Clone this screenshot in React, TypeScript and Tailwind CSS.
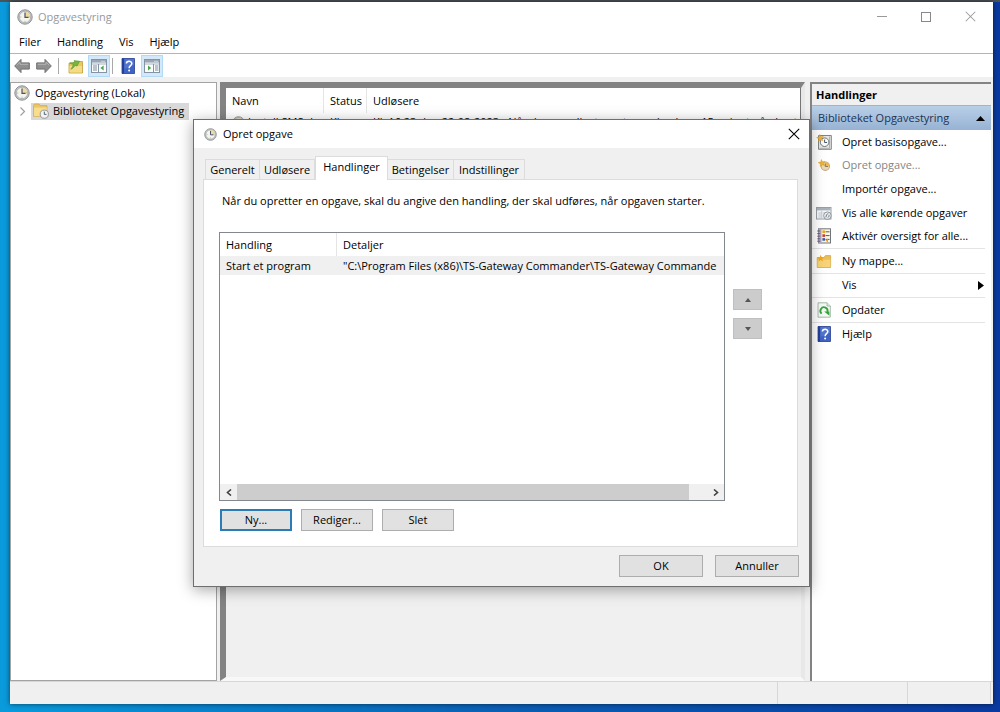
import type { ReactNode } from "react";

function ClockIcon({ className = "size-4" }: { className?: string }) {
  return (
    <svg className={className} viewBox="0 0 16 16" aria-hidden="true">
      <circle cx="8" cy="8" r="7.2" fill="#c3c6c8" stroke="#8d9193" strokeWidth="1" />
      <circle cx="8" cy="8" r="5.6" fill="#f5f5ee" stroke="#9a9d9f" strokeWidth=".6" />
      <path d="M8 8V2.6A5.4 5.4 0 0 1 13.2 8Z" fill="#f0d9a0" />
      <path d="M8 3.6V8.4H11.6" fill="none" stroke="#44536a" strokeWidth="1.2" />
      <path d="M3.4 8h.8M8 12.6v-.8M12.6 8h-.6" stroke="#7b8086" strokeWidth=".8" />
    </svg>
  );
}

function ArrowIcon({ flip = false }: { flip?: boolean }) {
  return (
    <svg className={flip ? "h-4 w-4 -scale-x-100" : "h-4 w-4"} viewBox="0 0 16 16" aria-hidden="true">
      <path d="M.7 8 7 1.4V4.9h8.3v6.2H7v3.5Z" fill="#8f8f8f" stroke="#6f6f6f" strokeWidth="1" strokeLinejoin="round" />
      <path d="M2.6 7.4 6 4.2V6.3h8.2" fill="none" stroke="#b5b5b5" strokeWidth="1" />
    </svg>
  );
}

function FolderUpIcon() {
  return (
    <svg className="h-4 w-4" viewBox="0 0 16 16" aria-hidden="true">
      <path d="M1 5h5l1.5-1.5H14.5V15H1Z" fill="#e9c95f" stroke="#c09c3a" strokeWidth=".8" />
      <path d="M1.5 8H14v6.5H1.5Z" fill="#f4dc86" />
      <path d="M2.8 11.2C4.6 10.6 6.2 9.4 7 7.2L9 8.2 11.6 3.2 6 2.6 6.6 4.2C5 4.8 3.4 5 2 4.8 3 6 4.2 6.4 5.4 6.2 4.8 8.2 4 9.8 2.8 11.2Z" fill="#74b83a" stroke="#4a8f2a" strokeWidth=".5" />
    </svg>
  );
}

function PaneIcon({ side }: { side: "left" | "right" }) {
  const inner = side === "left";
  return (
    <svg className="h-4 w-4" viewBox="0 0 16 16" aria-hidden="true">
      <rect x=".5" y="1.5" width="15" height="13" fill="#fbfcfd" stroke="#8693a3" />
      <path d="M1 2h14v2.6H1Z" fill="#9aa6b5" />
      <path d="M10.5 3.3h1M12.5 3.3h1" stroke="#fff" strokeWidth="1" />
      <path d="M1 6h14" stroke="#a9b4c1" strokeWidth="1" />
      {inner ? (
        <>
          <path d="M7.5 6v8.5" stroke="#8693a3" />
          <path d="M2 8h4M2 10h4M2 12h4" stroke="#7f8b9b" strokeWidth="1" />
          <path d="M12.6 7.6v5L9.4 10.1Z" fill="#49a548" />
        </>
      ) : (
        <>
          <path d="M9.5 6v8.5" stroke="#8693a3" />
          <path d="M11 8h3.4M11 10h3.4M11 12h3.4" stroke="#7f8b9b" strokeWidth="1" />
          <path d="M4 7.6v5l3.2-2.5Z" fill="#49a548" />
        </>
      )}
    </svg>
  );
}

function HelpIcon() {
  return (
    <svg className="h-4 w-4" viewBox="0 0 16 16" aria-hidden="true">
      <path d="M2 .5h12.5v15H2Z" fill="#3f63c4" stroke="#27408f" strokeWidth=".8" />
      <path d="M2 .5h2v15H2Z" fill="#263f96" />
      <path d="M4.5 1H14v6L4.5 11Z" fill="#5f80d6" opacity=".6" />
      <path d="M6.4 5.6C6.4 2.6 11.8 2.6 11.8 5.5 11.8 7.5 9.1 7.8 9.1 10.2" fill="none" stroke="#fff" strokeWidth="1.5" />
      <circle cx="9.1" cy="12.6" r="1" fill="#fff" />
    </svg>
  );
}

function LibraryIcon() {
  return (
    <svg className="h-4 w-4" viewBox="0 0 16 16" aria-hidden="true">
      <path d="M.6 2.2 1.6 1H6l1.2 1.6H14V13.4H.6Z" fill="#ecc766" stroke="#d0a545" strokeWidth=".7" />
      <path d="M1 4.6h12.7v8.6H1Z" fill="#f8dd8c" />
      <circle cx="11.3" cy="11.2" r="4.1" fill="#f3f4f0" stroke="#92979b" strokeWidth="1" />
      <path d="M11.3 8.6v2.8h2.2" fill="none" stroke="#55647a" strokeWidth="1" />
    </svg>
  );
}

function Spark() {
  return <path d="M3.8.5 4.8 2.8 7.4 2.4 5.8 4.3 7 6.6 4.6 5.8 2.6 7.4 2.8 4.9.6 3.6 3.1 3Z" fill="#f2b32c" stroke="#d2901b" strokeWidth=".4" />;
}

function BasicTaskIcon() {
  return (
    <svg className="h-4 w-4" viewBox="0 0 16 16" aria-hidden="true">
      <path d="M2.5 1.5h12.8v13.8H2.5Z" fill="#e6e6e4" stroke="#808386" />
      <path d="M13.5 2.5v11.8H3.5" fill="none" stroke="#a5a5a5" strokeWidth=".8" />
      <circle cx="8.6" cy="8.2" r="4.3" fill="#fafaf6" stroke="#6f767d" strokeWidth="1" />
      <path d="M8.6 5.6v2.9h2.5" fill="none" stroke="#48566b" strokeWidth="1" />
      <Spark />
    </svg>
  );
}

function NewTaskIcon() {
  return (
    <svg className="h-4 w-4" viewBox="0 0 16 16" aria-hidden="true">
      <circle cx="9.3" cy="9.2" r="4.2" fill="#ecd9b2" stroke="#c0ab84" strokeWidth="1.1" />
      <path d="M9.3 9.2V5.2a4 4 0 0 1 4 4Z" fill="#efb950" />
      <path d="M9.3 6.4v3.1h2.7" fill="none" stroke="#8a7a62" strokeWidth="1" />
      <g transform="translate(1.6 2)">
        <Spark />
      </g>
    </svg>
  );
}

function RunningTasksIcon() {
  return (
    <svg className="h-4 w-4" viewBox="0 0 16 16" aria-hidden="true">
      <rect x=".5" y="2.5" width="14.5" height="11.5" fill="#f7f8f9" stroke="#999fa6" />
      <path d="M1 3h13.5v2.4H1Z" fill="#aab3bd" />
      <path d="M2.5 8h3M2.5 10h3M2.5 12h3M7 8h1.5M5.8 6v7.5" stroke="#bcc3ca" strokeWidth=".9" />
      <circle cx="11.4" cy="10.7" r="3.8" fill="#eceff1" stroke="#868d95" strokeWidth=".9" />
      <path d="M9.9 12.4c.2-2 1-3.4 2.5-4.2M11.6 12.8c1.2-.7 1.6-1.8 1.4-3" fill="none" stroke="#66707b" strokeWidth=".9" />
    </svg>
  );
}

function HistoryIcon() {
  return (
    <svg className="h-4 w-4" viewBox="0 0 16 16" aria-hidden="true">
      <rect x="2.5" y=".8" width="12" height="14.2" fill="#fdf6dc" stroke="#70757f" />
      <path d="M2.5.8h3v14.2h-3Z" fill="#b4a7c2" />
      <path d="M1.2 3h3M1.2 5.6h3M1.2 8.2h3M1.2 10.8h3M1.2 13.2h3" stroke="#5d5b6d" strokeWidth=".9" />
      <path d="M9.5 3.8h4M9.5 7.6h4M9.5 11.4h4" stroke="#4a5a86" strokeWidth="1" />
      <path d="M6.4 2.4h2.6v2.6H6.4Z" fill="#e2ab26" />
      <path d="M6.4 6.3h2.6v2.6H6.4Z" fill="#c93c37" />
      <path d="M6.4 10.1h2.6v2.6H6.4Z" fill="#375bb4" />
      <path d="M9.5 12.6 12 10.6v4Z" fill="#dfa62d" />
    </svg>
  );
}

function NewFolderIcon() {
  return (
    <svg className="h-4 w-4" viewBox="0 0 16 16" aria-hidden="true">
      <path d="M1.2 4.5H8L9.4 2.6h5.2V14.5H1.2Z" fill="#eac05a" stroke="#d0a03a" strokeWidth=".7" />
      <path d="M1.6 6.8h12.7v7.3H1.6Z" fill="#f8d377" />
      <path d="M4.6 1.8 5.6 4.2 8.2 4.3 6.2 5.9 6.9 8.4 4.6 7 2.4 8.4 3.1 5.9 1.1 4.3 3.7 4.2Z" fill="#f0a81f" />
    </svg>
  );
}

function RefreshIcon() {
  return (
    <svg className="h-4 w-4" viewBox="0 0 16 16" aria-hidden="true">
      <path d="M2 .8h9L14.3 4v11.2H2Z" fill="#f5faf5" stroke="#92aa95" strokeWidth=".8" />
      <path d="M11 .8V4h3.3" fill="#dce8dc" stroke="#92aa95" strokeWidth=".7" />
      <path d="M5.6 11.6A3.6 3.6 0 1 1 11.4 10" fill="none" stroke="#37a33e" strokeWidth="1.8" />
      <path d="M8.2 9.6h5.2v4.2Z" fill="#37a33e" />
    </svg>
  );
}

function CloseIcon({ className }: { className: string }) {
  return (
    <svg className={className} viewBox="0 0 12 12" aria-hidden="true">
      <path d="M.8.8 11.2 11.2M11.2.8.8 11.2" fill="none" stroke="currentColor" strokeWidth="1.1" />
    </svg>
  );
}

function ToolButton({ label, active = false, children }: { label: string; active?: boolean; children: ReactNode }) {
  return (
    <button
      type="button"
      aria-label={label}
      className={
        active
          ? "flex h-[22px] w-[22px] items-center justify-center border border-[#b3daf5] bg-[#d3e9fa]"
          : "flex h-[22px] w-[22px] items-center justify-center"
      }
    >
      {children}
    </button>
  );
}

function ActionRow({ icon, label, disabled = false, submenu = false }: { icon?: ReactNode; label: string; disabled?: boolean; submenu?: boolean }) {
  return (
    <button
      type="button"
      disabled={disabled}
      className={
        disabled
          ? "flex w-full flex-1 items-center gap-[10px] pl-[4px] pr-[7px] text-left text-[#858585]"
          : "flex w-full flex-1 items-center gap-[10px] pl-[4px] pr-[7px] text-left"
      }
    >
      <span className="w-4 shrink-0">{icon}</span>
      <span className="flex-1 whitespace-nowrap">{label}</span>
      {submenu && (
        <svg className="h-[9px] w-[6px]" viewBox="0 0 6 9" aria-hidden="true">
          <path d="M0 0 6 4.5 0 9Z" fill="#000" />
        </svg>
      )}
    </button>
  );
}

function PushButton({ label, wide = false, primary = false }: { label: string; wide?: boolean; primary?: boolean }) {
  const base = "flex h-[22px] items-center justify-center bg-[#e2e1e2]";
  const width = wide ? "w-[84px]" : "w-[72px]";
  const border = primary ? "border-2 border-[#2b7cb5]" : "border border-[#adadad]";
  return (
    <button type="button" className={`${base} ${width} ${border}`}>
      {label}
    </button>
  );
}

const tabs = [
  { label: "Generelt", width: "w-[55px]" },
  { label: "Udløsere", width: "w-[55px]" },
  { label: "Handlinger", width: "w-[73px]" },
  { label: "Betingelser", width: "w-[66px]" },
  { label: "Indstillinger", width: "w-[71px]" },
];

function TaskDialog() {
  return (
    <section
      role="dialog"
      aria-labelledby="dialog-title"
      className="absolute left-[193px] top-[119px] flex h-[468px] w-[617px] flex-col border border-[#6e6e6e] bg-[#f0f0f0] shadow-[0_3px_14px_rgba(0,0,0,0.35)]"
    >
      <header className="flex h-[28px] items-center bg-white pl-[10px] pr-[9px]">
        <ClockIcon className="h-[13px] w-[13px]" />
        <h2 id="dialog-title" className="flex-1 pl-[6px]">Opret opgave</h2>
        <button type="button" aria-label="Luk dialog" className="flex h-5 w-3 items-center">
          <CloseIcon className="h-3 w-3" />
        </button>
      </header>

      <div role="tablist" className="flex h-[31px] items-end pl-[11px]">
        {tabs.map((tab) => {
          const active = tab.label === "Handlinger";
          return (
            <button
              key={tab.label}
              type="button"
              role="tab"
              aria-selected={active}
              className={`${tab.width} ${
                active
                  ? "relative -mb-px h-[24px] border border-b-0 border-[#dcdcdc] bg-white pb-[3px]"
                  : "h-[20px] border border-b-0 border-l-0 border-[#dcdcdc] first:border-l"
              } whitespace-nowrap`}
            >
              {tab.label}
            </button>
          );
        })}
      </div>

      <div role="tabpanel" className="ml-[9px] mr-[11px] flex flex-1 flex-col border border-[#dcdcdc] bg-white px-[15px] pb-[15px] pt-[13px]">
        <p className="h-4 pl-[3px] leading-4">
          Når du opretter en opgave, skal du angive den handling, der skal udføres, når opgaven starter.
        </p>
        <div className="mt-[23px] flex flex-1 gap-[8px]">
          <div className="flex w-[506px] flex-col border border-[#828790]">
            <div className="flex-1 overflow-hidden">
              <table className="w-full table-fixed border-separate border-spacing-0 whitespace-nowrap text-left">
                <colgroup>
                  <col className="w-[117px]" />
                  <col />
                </colgroup>
                <thead>
                  <tr className="h-[23px]">
                    <th className="border-r border-[#e5e5e5] p-0 pl-[6px] font-normal">Handling</th>
                    <th className="p-0 pl-[6px] font-normal">Detaljer</th>
                  </tr>
                </thead>
                <tbody>
                  <tr className="h-[19px] bg-[#f0f0f0]">
                    <td className="p-0 pl-[6px]">Start et program</td>
                    <td className="p-0 pl-[6px]">"C:\Program Files (x86)\TS-Gateway Commander\TS-Gateway Commande</td>
                  </tr>
                </tbody>
              </table>
            </div>
            <div className="flex h-[16px] bg-[#f0f0f0]">
              <button type="button" aria-label="Rul til venstre" className="flex w-[17px] items-center justify-center">
                <svg className="h-[7px] w-[6px]" viewBox="0 0 6 7" aria-hidden="true">
                  <path d="M5 .5 1.5 3.5 5 6.5" fill="none" stroke="#404040" strokeWidth="1.6" />
                </svg>
              </button>
              <div className="w-[452px] bg-[#cdcdcd]" />
              <button type="button" aria-label="Rul til højre" className="ml-auto flex w-[17px] items-center justify-center">
                <svg className="h-[7px] w-[6px]" viewBox="0 0 6 7" aria-hidden="true">
                  <path d="M1 .5 4.5 3.5 1 6.5" fill="none" stroke="#404040" strokeWidth="1.6" />
                </svg>
              </button>
            </div>
          </div>
          <div className="flex flex-col gap-[8px] pt-[57px]">
            <button type="button" aria-label="Flyt op" className="flex h-[21px] w-[29px] items-center justify-center border border-[#bfbfbf] bg-[#cccccc]">
              <svg className="h-[4px] w-[6px]" viewBox="0 0 6 4" aria-hidden="true">
                <path d="M3 0 6 4H0Z" fill="#555" />
              </svg>
            </button>
            <button type="button" aria-label="Flyt ned" className="flex h-[21px] w-[29px] items-center justify-center border border-[#bfbfbf] bg-[#cccccc]">
              <svg className="h-[4px] w-[6px]" viewBox="0 0 6 4" aria-hidden="true">
                <path d="M3 4 6 0H0Z" fill="#555" />
              </svg>
            </button>
          </div>
        </div>
        <div className="mt-[8px] flex gap-[9px] pl-px">
          <PushButton label="Ny..." primary />
          <PushButton label="Rediger..." />
          <PushButton label="Slet" />
        </div>
      </div>

      <footer className="flex h-[39px] items-center justify-end gap-[12px] pb-px pr-[10px]">
        <PushButton label="OK" wide />
        <PushButton label="Annuller" wide />
      </footer>
    </section>
  );
}

export default function App() {
  return (
    <div className="relative flex h-screen flex-col overflow-hidden bg-linear-to-r from-[#0a9bdc] via-[#0b5fb4] to-[#0a3aa0] pb-[8px] pl-[10px] pr-[7px] font-['Open_Sans','Noto_Sans',sans-serif] text-[11px] leading-4 text-black">
      <div className="-ml-[10px] -mr-[7px] h-[2px] shrink-0 bg-[#4c5357]" />
      <main className="flex min-h-0 flex-1 flex-col bg-[#f0f0f0] shadow-[0_0_5px_rgba(0,0,0,0.6)]">
        <header className="flex h-[29px] items-center bg-white pl-[7px] pr-[17px] text-[#999]">
          <ClockIcon />
          <h1 className="flex-1 pl-[5px]">Opgavestyring</h1>
          <div className="flex items-center gap-[34px]">
            <button type="button" aria-label="Minimer" className="flex h-4 w-[10px] items-center">
              <span className="h-px w-full bg-[#999]" />
            </button>
            <button type="button" aria-label="Maksimer" className="h-[10px] w-[10px] border border-[#888]" />
            <button type="button" aria-label="Luk" className="flex h-4 w-[11px] items-center">
              <CloseIcon className="h-[11px] w-[11px]" />
            </button>
          </div>
        </header>
        <nav className="flex h-[22px] items-center gap-[16px] bg-white pl-[9px]">
          <button type="button">Filer</button>
          <button type="button">Handling</button>
          <button type="button">Vis</button>
          <button type="button">Hjælp</button>
        </nav>
        <div className="flex h-[24px] items-center border-t border-[#b5b5b5] bg-white pl-px">
          <ToolButton label="Tilbage"><ArrowIcon /></ToolButton>
          <ToolButton label="Frem"><ArrowIcon flip /></ToolButton>
          <span className="ml-[3px] mr-[6px] h-4 w-px bg-[#a8a8a8]" />
          <ToolButton label="Et niveau op"><FolderUpIcon /></ToolButton>
          <span className="w-px" />
          <ToolButton label="Vis konsoltræ" active><PaneIcon side="left" /></ToolButton>
          <span className="ml-[2px] mr-[4px] h-4 w-px bg-[#a8a8a8]" />
          <ToolButton label="Hjælp"><HelpIcon /></ToolButton>
          <span className="w-[2px]" />
          <ToolButton label="Vis handlingsrude" active><PaneIcon side="right" /></ToolButton>
        </div>

        <div className="flex min-h-0 flex-1 pr-[2px] pt-[5px]">
          <aside className="w-[207px] shrink-0 border border-[#a3a3a3] bg-white pt-px">
            <ul>
              <li className="flex h-[18px] items-center gap-[5px] pl-[3px]">
                <ClockIcon />
                Opgavestyring (Lokal)
              </li>
              <li className="flex h-[18px] items-center">
                <svg className="ml-[8px] mr-[5px] h-[9px] w-[7px]" viewBox="0 0 7 9" aria-hidden="true">
                  <path d="M1.5.5 5.5 4.5 1.5 8.5" fill="none" stroke="#a0a0a0" strokeWidth="1.2" />
                </svg>
                <span className="flex h-[17px] items-center gap-[4px] whitespace-nowrap bg-[#d9d9d9] pl-[2px] pr-[5px]">
                  <LibraryIcon />
                  Biblioteket Opgavestyring
                </span>
              </li>
            </ul>
          </aside>

          <section className="ml-[3px] mr-[5px] flex min-w-0 flex-1 flex-col border-b-4 border-l-[6px] border-r-4 border-t-[6px] border-b-[#f8f8f8] border-l-[#838383] border-r-[#e8e8e8] border-t-[#838383] bg-[#f0f0f0]">
            <div className="h-[90px] overflow-hidden border-r border-[#777] bg-white">
              <table className="w-full table-fixed border-separate border-spacing-0 whitespace-nowrap text-left">
                <colgroup>
                  <col className="w-[98px]" />
                  <col className="w-[43px]" />
                  <col />
                </colgroup>
                <thead>
                  <tr className="h-[25px]">
                    <th className="border-r border-[#e5e5e5] p-0 pl-[6px] font-normal">Navn</th>
                    <th className="border-r border-[#e5e5e5] p-0 pl-[6px] font-normal">Status</th>
                    <th className="p-0 pl-[6px] font-normal">Udløsere</th>
                  </tr>
                </thead>
                <tbody>
                  <tr className="h-[18px]">
                    <td className="p-0 pl-[6px]">
                      <span className="flex items-center gap-[3px]">
                        <ClockIcon className="h-[13px] w-[13px] shrink-0" />
                        Install SMS.d
                      </span>
                    </td>
                    <td className="p-0 pl-[6px]">Klar</td>
                    <td className="p-0 pl-[6px]">
                      Kl. 16:23 den 22-08-2023 - Når den er udløst, gentages den hver 15. minut på ubest
                    </td>
                  </tr>
                </tbody>
              </table>
            </div>
          </section>

          <aside className="flex w-[181px] shrink-0 flex-col border-l-2 border-t-2 border-[#838383] bg-white">
            <h2 className="h-[22px] border-b border-[#b0b0b0] bg-[#f0f0f0] pl-[4px] font-bold leading-[22px]">Handlinger</h2>
            <button type="button" className="flex h-[24px] shrink-0 items-center justify-between bg-linear-to-b from-[#b9cfe8] to-[#97b3d3] pl-[6px] pr-[6px] text-[#1c3253]">
              Biblioteket Opgavestyring
              <svg className="h-[5px] w-[9px]" viewBox="0 0 9 5" aria-hidden="true">
                <path d="M4.5 0 9 5H0Z" fill="#000" />
              </svg>
            </button>
            <div className="flex h-[118px] flex-col">
              <ActionRow icon={<BasicTaskIcon />} label="Opret basisopgave..." />
              <ActionRow icon={<NewTaskIcon />} label="Opret opgave..." disabled />
              <ActionRow label="Importér opgave..." />
              <ActionRow icon={<RunningTasksIcon />} label="Vis alle kørende opgaver" />
              <ActionRow icon={<HistoryIcon />} label="Aktivér oversigt for alle..." />
            </div>
            <div className="mr-[6px] flex h-[98px] flex-col divide-y divide-[#e3e3e3] border-t border-[#e3e3e3] *:pr-px">
              <ActionRow icon={<NewFolderIcon />} label="Ny mappe..." />
              <ActionRow label="Vis" submenu />
              <ActionRow icon={<RefreshIcon />} label="Opdater" />
              <ActionRow icon={<HelpIcon />} label="Hjælp" />
            </div>
          </aside>
        </div>

        <footer className="flex h-[23px] shrink-0 justify-end border-t border-[#d7d7d7] bg-[#f0f0f0] pr-[2px]">
          <span className="w-[130px] border-l border-[#d7d7d7]" />
          <span className="w-[84px] border-x border-[#d7d7d7]" />
        </footer>
      </main>
      <TaskDialog />
    </div>
  );
}
